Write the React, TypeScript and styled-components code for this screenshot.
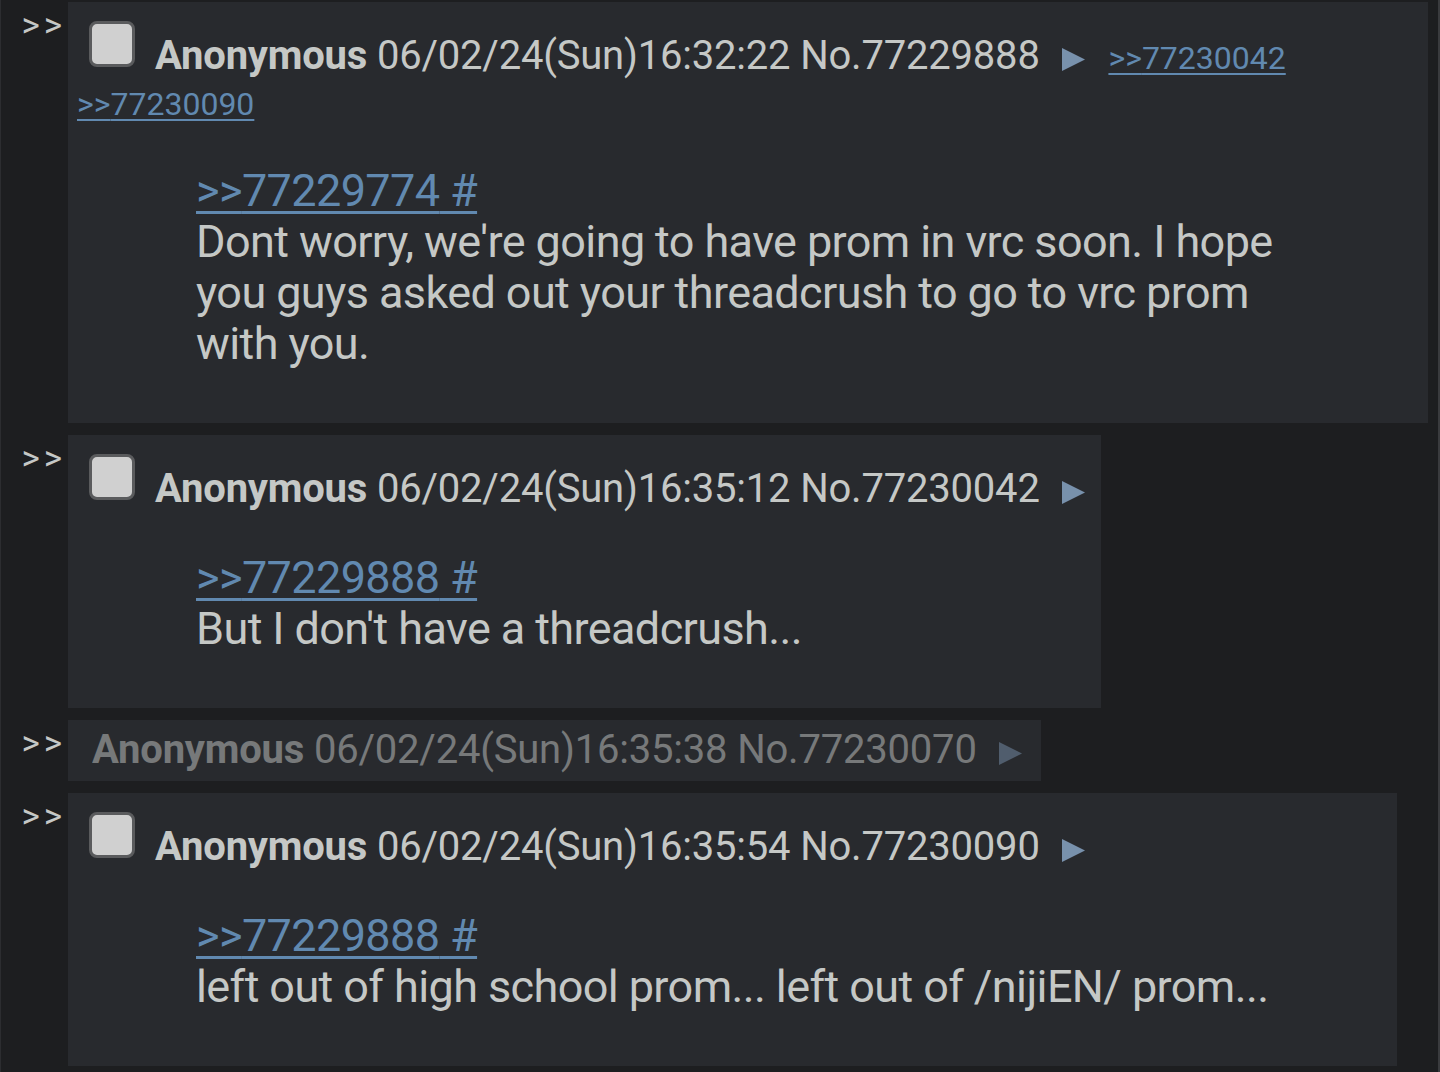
import * as React from 'react';
import styled, { createGlobalStyle } from 'styled-components';

const GlobalStyle = createGlobalStyle`
  html, body {
    margin: 0;
    padding: 0;
    background: #1d1e20;
  }
  body {
    font-family: Roboto, "Liberation Sans", sans-serif;
    color: #c5c8c6;
  }
`;

const Thread = styled('div')`
  min-height: 1072px;
  box-sizing: border-box;
  padding: 2px 10px 0 0;
  border-left: 1px solid #2c2d30;
  border-right: 2px solid #3a3b3e;
  display: flex;
  flex-direction: column;
  gap: 12px;
`;

const Row = styled('div')`
  display: flex;
  align-items: flex-start;
`;

const SideArrows = styled('div')`
  width: 67px;
  flex: none;
  box-sizing: border-box;
  padding: 6px 2px 0 0;
  text-align: right;
  font-size: 35px;
  line-height: 36px;
  letter-spacing: 4px;
  color: #c5c8c6;
`;

const Post = styled('div')`
  background: #282a2e;
  min-width: 0;
`;

const Header = styled('div')<{ $collapsed?: boolean }>`
  font-size: 40px;
  line-height: ${(p) => (p.$collapsed ? '48px' : '46px')};
  letter-spacing: -0.2px;
  padding: ${(p) => (p.$collapsed ? '6px 19px 7px 24px' : '19px 16px 0 9px')};
  opacity: ${(p) => (p.$collapsed ? 0.5 : 1)};
`;

const Check = styled('span')`
  display: inline-block;
  width: 46px;
  height: 46px;
  box-sizing: border-box;
  margin: 0 20px 2px 12px;
  border: 3px solid #5a5b5d;
  border-radius: 8px;
  background: #d0d0d0;
`;

const Name = styled('span')`
  font-weight: 700;
`;

const Menu = styled('svg')<{ $spaced?: boolean }>`
  display: inline-block;
  width: 23px;
  height: 23px;
  margin: 0 ${(p) => (p.$spaced ? '14px' : '0')} 0 22px;
  vertical-align: -2px;
`;

const Backlink = styled('a')`
  font-size: 32px;
  line-height: 1;
  letter-spacing: 0;
  color: #6189b0;
  text-decoration: underline;
  text-underline-offset: 4px;
  text-decoration-thickness: 2px;
`;

const Message = styled('blockquote')`
  margin: 40px 128px 54px 128px;
  font-size: 45px;
  line-height: 51px;
  letter-spacing: -0.6px;
`;

const QuoteLink = styled('a')`
  color: #6189b0;
  text-decoration: underline;
  text-underline-offset: 5px;
  text-decoration-thickness: 3px;
`;

const MenuArrow = ({ spaced }: { spaced?: boolean }) => (
  <Menu viewBox="0 0 23 23" $spaced={spaced}>
    <polygon points="0,0 23,11.5 0,23" fill="#7891ac" />
  </Menu>
);

interface IPost {
  id: string;
  time: string;
  backlinks?: string[];
  quote?: string;
  text?: string;
  collapsed?: boolean;
}

const posts: IPost[] = [
  {
    id: '77229888',
    time: '06/02/24(Sun)16:32:22',
    backlinks: ['77230042', '77230090'],
    quote: '77229774',
    text: "Dont worry, we're going to have prom in vrc soon. I hope you guys asked out your threadcrush to go to vrc prom with you.",
  },
  {
    id: '77230042',
    time: '06/02/24(Sun)16:35:12',
    quote: '77229888',
    text: "But I don't have a threadcrush...",
  },
  { id: '77230070', time: '06/02/24(Sun)16:35:38', collapsed: true },
  {
    id: '77230090',
    time: '06/02/24(Sun)16:35:54',
    quote: '77229888',
    text: 'left out of high school prom... left out of /nijiEN/ prom...',
  },
];

const PostItem = ({ post }: { post: IPost }) => {
  const backlinks = post.backlinks || [];
  return (
    <Row>
      <SideArrows>&gt;&gt;</SideArrows>
      <Post>
        <Header $collapsed={post.collapsed}>
          {!post.collapsed && <Check />}
          <Name>Anonymous</Name> <span>{post.time}</span> <span>No.{post.id}</span>
          <MenuArrow spaced={backlinks.length > 0} />
          {backlinks.map((b) => (
            <React.Fragment key={b}>
              {' '}
              <Backlink>&gt;&gt;{b}</Backlink>
            </React.Fragment>
          ))}
        </Header>
        {!post.collapsed && (
          <Message>
            <QuoteLink>&gt;&gt;{post.quote} #</QuoteLink>
            <br />
            {post.text}
          </Message>
        )}
      </Post>
    </Row>
  );
};

const App = () => (
  <>
    <GlobalStyle />
    <Thread>
      {posts.map((p) => (
        <PostItem key={p.id} post={p} />
      ))}
    </Thread>
  </>
);

export default App;
